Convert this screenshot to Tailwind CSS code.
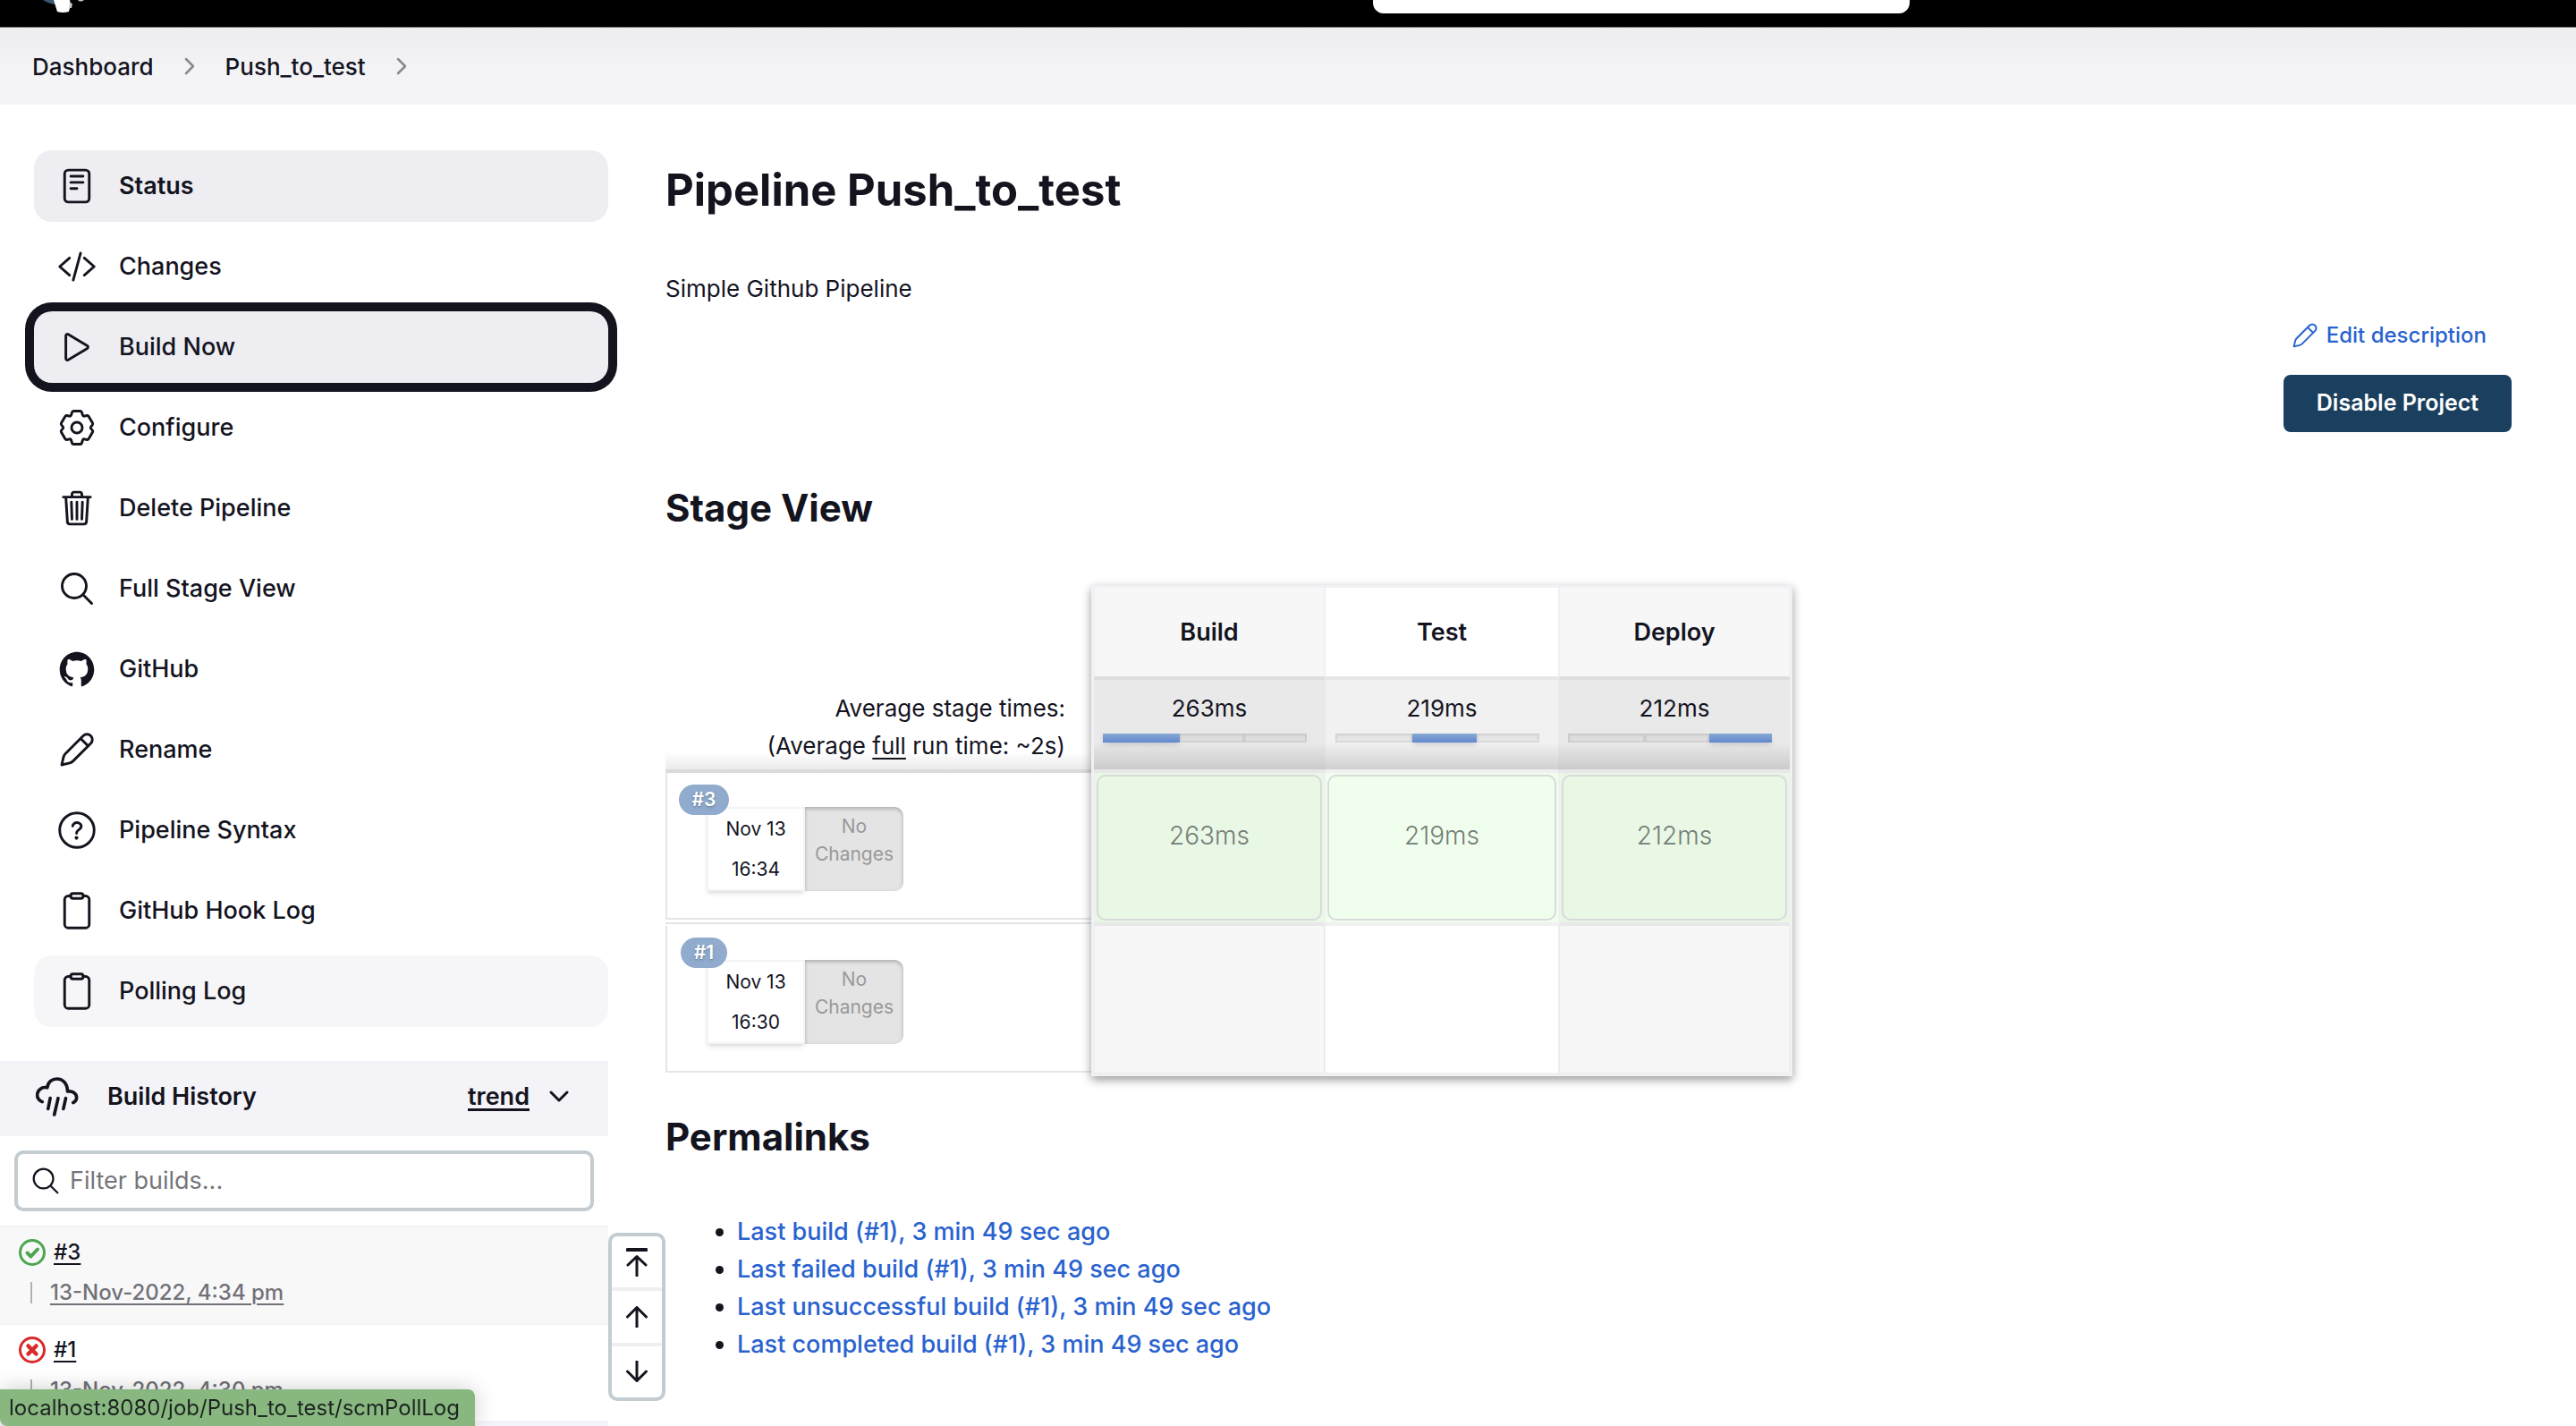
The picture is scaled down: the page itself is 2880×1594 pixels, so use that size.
<!DOCTYPE html>
<html lang="en">
<head>
<meta charset="utf-8">
<meta name="viewport" content="width=device-width, initial-scale=1">
<title>Push_to_test [Jenkins]</title>
<script src="https://cdn.jsdelivr.net/npm/@tailwindcss/browser@4"></script>
</head>
<body class="relative min-h-screen overflow-x-hidden bg-white font-['Inter',sans-serif] text-[#14141f]">

<!-- Shared outline icons -->
<svg class="hidden" aria-hidden="true">
  <symbol id="i-status" viewBox="0 0 512 512"><rect x="96" y="48" width="320" height="416" rx="48"/><path d="M176 128h160M176 208h160M176 288h80"/></symbol>
  <symbol id="i-code" viewBox="0 0 512 512"><path d="M160 368L32 256l128-112M352 368l128-112-128-112M304 80l-96 352"/></symbol>
  <symbol id="i-play" viewBox="0 0 512 512"><path d="M112 111v290c0 17.44 17 28.52 31 20.16l247.9-148.37c12.12-7.25 12.12-26.33 0-33.58L143 90.84c-14-8.36-31 2.72-31 20.16z"/></symbol>
  <symbol id="i-gear" viewBox="0 0 512 512"><path d="M213 40H299Q315 40 320 58L330 90Q336 110 355 106L385 99Q401 96 409 110L460 197Q468 211 457 222L439 243Q429 256 439 269L457 290Q468 301 460 315L409 402Q401 416 385 413L355 406Q336 402 330 422L320 454Q315 472 299 472H213Q197 472 192 454L182 422Q176 402 157 406L127 413Q111 416 103 402L52 315Q44 301 55 290L73 269Q83 256 73 243L55 222Q44 211 52 197L103 110Q111 96 127 99L157 106Q176 110 182 90L192 58Q197 40 213 40Z"/><circle cx="256" cy="256" r="70"/></symbol>
  <symbol id="i-trash" viewBox="0 0 512 512"><path d="M112 112l20 320c.95 18.49 14.4 32 32 32h184c17.67 0 30.87-13.51 32-32l20-320M80 112h352M192 112V72a23.93 23.93 0 0124-24h80a23.93 23.93 0 0124 24v40M256 176v224M184 176l8 224M328 176l-8 224"/></symbol>
  <symbol id="i-search" viewBox="0 0 512 512"><path d="M221.09 64a157.09 157.09 0 10157.09 157.09A157.1 157.1 0 00221.09 64zM338.29 338.29L448 448"/></symbol>
  <symbol id="i-github" viewBox="0 0 512 512"><path fill="currentColor" stroke="none" d="M256 32C132.3 32 32 134.9 32 261.7c0 101.5 64.2 187.5 153.2 217.9a17.56 17.56 0 003.8.4c8.3 0 11.5-6.1 11.5-11.4 0-5.5-.2-19.9-.3-39.1a102.4 102.4 0 01-22.6 2.7c-43.1 0-52.9-33.5-52.9-33.5-10.2-26.5-24.9-33.6-24.9-33.6-19.5-13.7-.1-14.1 1.4-14.1h.1c22.5 2 34.3 23.8 34.3 23.8 11.2 19.6 26.2 25.1 39.6 25.1a63 63 0 0025.6-6c2-14.8 7.8-24.9 14.2-30.7-49.7-5.8-102-25.5-102-113.5 0-25.1 8.7-45.6 23-61.6-2.3-5.8-10-29.2 2.2-60.8a18.64 18.64 0 015-.5c8.1 0 26.4 3.1 56.6 24.1a208.21 208.21 0 01112.2 0c30.2-21 48.5-24.1 56.6-24.1a18.64 18.64 0 015 .5c12.2 31.6 4.5 55 2.2 60.8 14.3 16.1 23 36.6 23 61.6 0 88.2-52.4 107.6-102.3 113.3 8 7.1 15.2 21.1 15.2 42.5 0 30.7-.3 55.5-.3 63 0 5.4 3.1 11.5 11.4 11.5a19.35 19.35 0 004-.4C415.9 449.2 480 363.1 480 261.7 480 134.9 379.7 32 256 32z"/></symbol>
  <symbol id="i-pencil" viewBox="0 0 512 512"><path d="M58 454L82 350Q88 326 106 308L338 76A67 67 0 0 1 436 174L204 406Q186 424 162 430ZM304 110L402 208"/></symbol>
  <symbol id="i-help" viewBox="0 0 512 512"><circle cx="256" cy="256" r="224"/><path d="M200 202.29s.84-17.5 19.57-32.57C230.68 160.77 244 158.18 256 158c10.93-.14 20.69 1.67 26.53 4.45 10 4.76 29.47 16.38 29.47 41.09 0 26-17 37.81-36.37 50.8S251 281.43 251 296"/><circle cx="250" cy="356" r="24" fill="currentColor" stroke="none"/></symbol>
  <symbol id="i-clipboard" viewBox="0 0 512 512"><path d="M336 64h32a48 48 0 0148 48v320a48 48 0 01-48 48H144a48 48 0 01-48-48V112a48 48 0 0148-48h32"/><rect x="176" y="32" width="160" height="64" rx="26"/></symbol>
  <symbol id="i-up" viewBox="0 0 24 24"><path d="M12 24V1.500M1.500 12L12 1.500L22.500 12"/></symbol>
</svg>

<header class="flex h-[31px] items-start border-b border-[#808080] bg-black pl-12">
  <a href="#" aria-label="Jenkins" class="block">
    <svg class="h-4 w-12" viewBox="0 0 48 16"><path d="M0 0h16l-2 5Q6 4 0 0z" fill="#3b5670"/><path d="M12 0h18l1 5-2 8q-7 2-13 0z" fill="#fff"/><path d="M30 3l3 1-1 5-3 0zM39 0h7q-4 3-7 0z" fill="#c9c9c9"/></svg>
  </a>
  <input type="search" aria-label="Search" class="mr-[745px] ml-auto h-[15px] w-[600px] rounded-b-xl bg-white outline-none">
</header>

<nav aria-label="Breadcrumb" class="flex h-[86px] items-center gap-[34px] bg-linear-to-b from-[#ededef] to-[#f4f4f7] to-60% pl-9 text-[26px] font-medium">
  <a href="#">Dashboard</a>
  <svg class="h-5 w-3 text-[#88888c]" viewBox="0 0 12 20" fill="none" stroke="currentColor" stroke-width="2.500" stroke-linecap="round" stroke-linejoin="round"><path d="M2 2l8 8-8 8"/></svg>
  <a href="#">Push_to_test</a>
  <svg class="h-5 w-3 text-[#88888c]" viewBox="0 0 12 20" fill="none" stroke="currentColor" stroke-width="2.500" stroke-linecap="round" stroke-linejoin="round"><path d="M2 2l8 8-8 8"/></svg>
</nav>

<div class="flex items-start">
  <aside class="relative w-[680px] shrink-0 pt-[51px]">
    <nav aria-label="Project" class="flex flex-col gap-2.5 pl-[38px] text-[27px] font-medium [&_a]:flex [&_a]:h-20 [&_a]:items-center [&_a]:gap-[25px] [&_a]:rounded-[20px] [&_a]:pl-[26px] [&_svg]:size-11 [&_svg]:fill-none [&_svg]:stroke-current [&_svg]:stroke-[34] [&_svg]:[stroke-linecap:round] [&_svg]:[stroke-linejoin:round]">
      <a href="#" class="bg-[#ededf2] font-semibold"><svg><use href="#i-status"/></svg>Status</a>
      <a href="#"><svg><use href="#i-code"/></svg>Changes</a>
      <a href="#" class="bg-[#ededf2] ring-[10px] ring-[#14141f]"><svg><use href="#i-play"/></svg>Build Now</a>
      <a href="#"><svg><use href="#i-gear"/></svg>Configure</a>
      <a href="#"><svg><use href="#i-trash"/></svg>Delete Pipeline</a>
      <a href="#"><svg><use href="#i-search"/></svg>Full Stage View</a>
      <a href="#"><svg><use href="#i-github"/></svg>GitHub</a>
      <a href="#"><svg><use href="#i-pencil"/></svg>Rename</a>
      <a href="#"><svg><use href="#i-help"/></svg>Pipeline Syntax</a>
      <a href="#"><svg><use href="#i-clipboard"/></svg>GitHub Hook Log</a>
      <a href="#" class="bg-[#f6f6f8]"><svg><use href="#i-clipboard"/></svg>Polling Log</a>
    </nav>

    <section class="mt-[38px]">
      <div class="flex h-[84px] items-center bg-[#f3f3f8] pr-11 pb-1 pl-10 text-[27px] font-semibold">
        <svg class="h-11 w-12" viewBox="30 46 146 134" fill="none" stroke="currentColor" stroke-width="11" stroke-linecap="round" stroke-linejoin="round"><path d="M52 130C38 124 33 112 36 100C40 86 54 78 69 82C71 62 86 52 102 52C122 52 138 68 138 95C156 92 169 102 169 116C169 124 164 130 157 133M79 118L72 154M106 118L93 174M132 118L124 154"/></svg>
        <h2 class="ml-8">Build History</h2>
        <a href="#" class="ml-auto underline decoration-[3px] underline-offset-4">trend</a>
        <svg class="ml-[22px] h-3.5 w-[22px]" viewBox="0 0 22 14" fill="none" stroke="currentColor" stroke-width="3" stroke-linecap="round" stroke-linejoin="round"><path d="M2 2l9 9 9-9"/></svg>
      </div>
      <label class="mx-4 mt-4 flex h-[68px] items-center gap-3 rounded-[10px] border-4 border-[#c3ccd1] pl-4 text-[27px]">
        <svg class="size-[30px] shrink-0" viewBox="40 40 432 432" fill="none" stroke="currentColor" stroke-width="32" stroke-linecap="round"><use href="#i-search" width="512" height="512"/></svg>
        <input type="text" aria-label="Filter builds" placeholder="Filter builds..." class="min-w-0 flex-1 outline-none placeholder:text-[#75757b]">
      </label>
      <ul class="mt-4 text-[24px] leading-8 font-medium">
        <li class="h-[109px] border-t-2 border-[#f3f3f8] bg-[#f8f8f8] pt-3 pl-[21px]">
          <div class="flex items-center gap-[9px]">
            <svg class="size-[30px] text-[#4ba651]" viewBox="0 0 30 30" fill="none" stroke="currentColor"><circle cx="15" cy="15" r="13.500" stroke-width="3"/><path d="M9.500 15.500l4 4 7.500-8" stroke-width="4" stroke-linecap="round" stroke-linejoin="round"/></svg>
            <a href="#" class="underline decoration-2 underline-offset-4">#3</a>
          </div>
          <div class="mt-[13px] ml-[13px] flex items-center gap-5">
            <span class="h-6 w-0.5 bg-[#a9b3ba]"></span>
            <a href="#" class="text-[#717179] underline decoration-2 underline-offset-4">13-Nov-2022, 4:34 pm</a>
          </div>
        </li>
        <li class="h-[109px] border-t-2 border-[#f3f3f8] pt-3 pl-[21px]">
          <div class="flex items-center gap-[9px]">
            <svg class="size-[30px] text-[#d9292b]" viewBox="0 0 30 30" fill="none" stroke="currentColor"><circle cx="15" cy="15" r="13.500" stroke-width="3"/><path d="M10.500 10.500l9 9M19.500 10.500l-9 9" stroke-width="4.500" stroke-linecap="round"/></svg>
            <a href="#" class="underline decoration-2 underline-offset-4">#1</a>
          </div>
          <div class="mt-[13px] ml-[13px] flex items-center gap-5">
            <span class="h-6 w-0.5 bg-[#a9b3ba]"></span>
            <a href="#" class="text-[#717179] underline decoration-2 underline-offset-4">13-Nov-2022, 4:30 pm</a>
          </div>
        </li>
      </ul>
      <div class="h-1.5 bg-[#f3f3f8]"></div>
    </section>

    <!-- Build history pager -->
    <div class="absolute bottom-7 left-full flex h-[188px] w-16 flex-col divide-y-4 divide-[#efeff0] rounded-[10px] border-4 border-[#c3ccd1] bg-white [&_button]:flex [&_button]:flex-1 [&_button]:items-center [&_button]:justify-center [&_svg]:fill-none [&_svg]:stroke-current [&_svg]:stroke-3 [&_svg]:[stroke-linecap:round] [&_svg]:[stroke-linejoin:round]">
      <button type="button" aria-label="Newest builds"><svg class="h-8 w-6" viewBox="0 0 24 32"><path d="M1.500 2H22.500" stroke-width="4"/><path d="M12 31V9.500M2 19L12 9.500L22 19"/></svg></button>
      <button type="button" aria-label="Newer builds"><svg class="size-6"><use href="#i-up"/></svg></button>
      <button type="button" aria-label="Older builds"><svg class="size-6 rotate-180"><use href="#i-up"/></svg></button>
    </div>
  </aside>

  <main class="min-w-0 flex-1 pt-[66px] pr-[72px] pl-16">
    <h1 class="text-[49px] leading-[60px] font-bold">Pipeline Push_to_test</h1>
    <p class="mt-[59px] text-[26px] leading-[42px]">Simple Github Pipeline</p>

    <div class="mt-2.5 flex flex-col items-end gap-[23px]">
      <a href="#" class="mr-7 flex h-[42px] items-center gap-2 text-[24px] font-medium text-[#2962cf]">
        <svg class="size-8 fill-none stroke-current stroke-[32] [stroke-linejoin:round]"><use href="#i-pencil"/></svg>Edit description
      </a>
      <button type="button" class="h-16 w-[255px] rounded-lg bg-[#1b3f5e] text-[25px] font-semibold text-white">Disable Project</button>
    </div>

    <h2 class="mt-[59px] text-[42px] leading-[52px] font-bold">Stage View</h2>

    <div class="relative mt-[62px] w-fit">
      <table class="w-[1258px] table-fixed border-separate border-spacing-0 text-[26px] leading-[42px]">
        <colgroup><col class="w-[478px]"><col class="w-[260px]"><col class="w-[260px]"><col class="w-[260px]"></colgroup>
        <thead>
          <tr class="h-[104px] text-[27px]">
            <td class="p-0"></td>
            <th scope="col" class="border-x-2 border-b-4 border-x-[#f0f0f2] border-b-[#dedede] bg-[#f7f7f7] p-0 pt-0.5 font-semibold">Build</th>
            <th scope="col" class="border-b-4 border-b-[#e6e6e6] bg-white p-0 pt-0.5 font-semibold">Test</th>
            <th scope="col" class="border-x-2 border-b-4 border-x-[#f0f0f2] border-b-[#dedede] bg-[#f7f7f7] p-0 pt-0.5 font-semibold">Deploy</th>
          </tr>
        </thead>
        <tbody class="[&_.bar]:mt-[7px] [&_.bar]:ml-[11px] [&_.bar]:grid [&_.bar]:h-2.5 [&_.bar]:w-[228px] [&_.bar]:grid-cols-[86px_72px_70px]">
          <tr class="h-[104px]">
            <th scope="row" class="border-b-4 border-[#dadada] bg-linear-to-t from-[#ebebeb] to-white to-20% p-0 pt-[11px] pr-[31px] text-right align-top font-normal">Average stage times:<br>(Average <span class="underline decoration-2 underline-offset-4">full</span> run time: ~2s)</th>
            <td class="border-b-4 border-[#e8e8ea] bg-linear-to-t from-[#cbcbcb] to-[#e9e9e9] to-30% p-0 pt-[11px] text-center align-top">263ms
              <div class="bar"><i class="bg-linear-to-b from-[#87a9d0] to-[#6387d2] shadow-md"></i><i class="bg-[#dedede] inset-shadow-sm inset-ring-2 inset-ring-black/5"></i><i class="bg-[#dedede] inset-shadow-sm inset-ring-2 inset-ring-black/5"></i></div>
            </td>
            <td class="border-b-4 border-[#f0f0f1] bg-linear-to-t from-[#d0d0d0] to-[#f1f1f1] to-30% p-0 pt-[11px] text-center align-top">219ms
              <div class="bar"><i class="bg-[#e6e6e6] inset-shadow-sm inset-ring-2 inset-ring-black/5"></i><i class="bg-linear-to-b from-[#87a9d0] to-[#6387d2] shadow-md"></i><i class="bg-[#e6e6e6] inset-shadow-sm inset-ring-2 inset-ring-black/5"></i></div>
            </td>
            <td class="border-b-4 border-[#e8e8ea] bg-linear-to-t from-[#cbcbcb] to-[#e9e9e9] to-30% p-0 pt-[11px] text-center align-top">212ms
              <div class="bar"><i class="bg-[#dedede] inset-shadow-sm inset-ring-2 inset-ring-black/5"></i><i class="bg-[#dedede] inset-shadow-sm inset-ring-2 inset-ring-black/5"></i><i class="bg-linear-to-b from-[#87a9d0] to-[#6387d2] shadow-md"></i></div>
            </td>
          </tr>
          <tr class="h-[171px] text-[#747d78] [&_.ok]:flex [&_.ok]:h-[163px] [&_.ok]:justify-center [&_.ok]:rounded-[10px] [&_.ok]:border-2 [&_.ok]:border-[#d8dadb] [&_.ok]:pt-[45px] [&_.ok]:text-[28px] [&_.ok]:font-light">
            <th scope="row" class="p-0 text-left align-top font-normal text-[#14141f]">
              <div class="h-[164px] border-b-2 border-l-2 border-[#e6e6e8] pt-[38px] pl-11">
                <div class="relative flex h-[94px] w-[220px] text-center text-[21px]">
                  <span class="absolute -top-[25px] -left-[31px] flex h-[34px] w-14 items-center justify-center rounded-full bg-[#90abcd] font-semibold text-white text-shadow-md">#3</span>
                  <div class="w-[110px] border-2 border-[#f3f3f8] bg-white leading-[45px] shadow-md">Nov 13<br>16:34</div>
                  <div class="w-[110px] rounded-r-[10px] bg-[#e4e4e4] pt-1.5 leading-[31px] text-[#999] inset-shadow-sm inset-shadow-black/25">No<br>Changes</div>
                </div>
              </div>
              <div class="mt-[3px] h-0.5 bg-[#e3e3e6]"></div>
            </th>
            <td class="border-x-2 border-b-4 border-x-[#f0f0f2] border-b-[#e9e9ea] bg-[#e9f7e5] p-0.5 align-top"><div class="ok">263ms</div></td>
            <td class="border-b-4 border-[#f1f1f2] bg-[#f0ffed] p-0.5 align-top"><div class="ok">219ms</div></td>
            <td class="border-x-2 border-b-4 border-x-[#f0f0f2] border-b-[#e9e9ea] bg-[#e9f7e5] p-0.5 align-top"><div class="ok">212ms</div></td>
          </tr>
          <tr class="h-[166px]">
            <th scope="row" class="p-0 text-left align-top font-normal">
              <div class="h-[164px] border-b-2 border-l-2 border-[#e6e6e8] pt-[38px] pl-11">
                <div class="relative flex h-[94px] w-[220px] text-center text-[21px]">
                  <span class="absolute -top-[25px] -left-[29px] flex h-[34px] w-[52px] items-center justify-center rounded-full bg-[#90abcd] font-semibold text-white text-shadow-md">#1</span>
                  <div class="w-[110px] border-2 border-[#f3f3f8] bg-white leading-[45px] shadow-md">Nov 13<br>16:30</div>
                  <div class="w-[110px] rounded-r-[10px] bg-[#e4e4e4] pt-1.5 leading-[31px] text-[#999] inset-shadow-sm inset-shadow-black/25">No<br>Changes</div>
                </div>
              </div>
            </th>
            <td class="border-x-2 border-b-2 border-[#ededef] bg-[#f7f7f7] p-0"></td>
            <td class="border-b-2 border-[#f1f1f3] bg-white p-0"></td>
            <td class="border-x-2 border-b-2 border-[#ededef] bg-[#f7f7f7] p-0"></td>
          </tr>
        </tbody>
      </table>
      <div class="pointer-events-none absolute -inset-y-0.5 -right-0.5 left-[476px] border-[3px] border-[#f1f1f5] shadow-[0_4px_10px_rgba(0,0,0,0.4)]"></div>
    </div>

    <h2 class="mt-11 text-[42px] leading-[52px] font-bold">Permalinks</h2>
    <ul class="mt-[59px] list-disc pl-20 text-[27px] leading-[42px] font-medium text-[#2962cf] marker:text-[#14141f]">
      <li><a href="#">Last build (#1), 3 min 49 sec ago</a></li>
      <li><a href="#">Last failed build (#1), 3 min 49 sec ago</a></li>
      <li><a href="#">Last unsuccessful build (#1), 3 min 49 sec ago</a></li>
      <li><a href="#">Last completed build (#1), 3 min 49 sec ago</a></li>
    </ul>
  </main>
</div>

<!-- Link target shown by the browser while hovering -->
<div class="fixed bottom-0 left-0 flex h-[41px] w-[531px] items-center rounded-tr-lg rounded-bl-lg bg-[#88b880] pl-2.5 text-[24px] text-[#1d2420] shadow-[0_0_24px_rgba(0,0,0,0.2)]">localhost:8080/job/Push_to_test/scmPollLog</div>
</body>
</html>
